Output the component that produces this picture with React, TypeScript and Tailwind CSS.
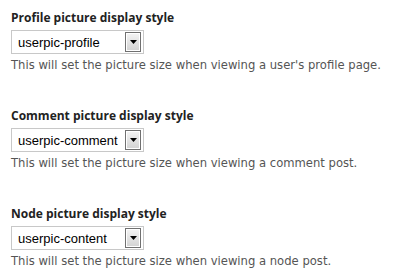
import React from "react";

function Arrow() {
  return (
    <div className="w-[16px] h-[20px] border border-[#707070] bg-white p-px box-border">
      <div className="w-full h-full bg-gradient-to-b from-[#f2f2f2] to-[#d4d4d4] flex items-center justify-center">
        <svg width="7" height="4" viewBox="0 0 7 4">
          <polygon points="0,0 7,0 3.5,4" fill="#000" />
        </svg>
      </div>
    </div>
  );
}

function Field({ label, value, desc }: { label: string; value: string; desc: string }) {
  return (
    <div className="flex flex-col items-start">
      <div className="text-[12px] font-bold text-[#222] leading-[15px] font-['Open_Sans',sans-serif]">{label}</div>
      <div className="mt-[5px] w-[133px] h-[24px] border border-[#c8c8c8] bg-white flex items-center justify-between pl-[6px] pr-[2px]">
        <span className="text-[13px] text-black font-['Liberation_Sans',Arial,sans-serif] leading-none">{value}</span>
        <Arrow />
      </div>
      <div className="mt-[4px] text-[11.6px] text-[#555] leading-[14px] font-['DejaVu_Sans',sans-serif]">{desc}</div>
    </div>
  );
}

export default function App() {
  return (
    <div className="w-[394px] h-[278px] bg-white pl-[11px] pt-[10px] flex flex-col gap-[36px]">
      <Field label="Profile picture display style" value="userpic-profile" desc="This will set the picture size when viewing a user's profile page." />
      <Field label="Comment picture display style" value="userpic-comment" desc="This will set the picture size when viewing a comment post." />
      <Field label="Node picture display style" value="userpic-content" desc="This will set the picture size when viewing a node post." />
    </div>
  );
}
